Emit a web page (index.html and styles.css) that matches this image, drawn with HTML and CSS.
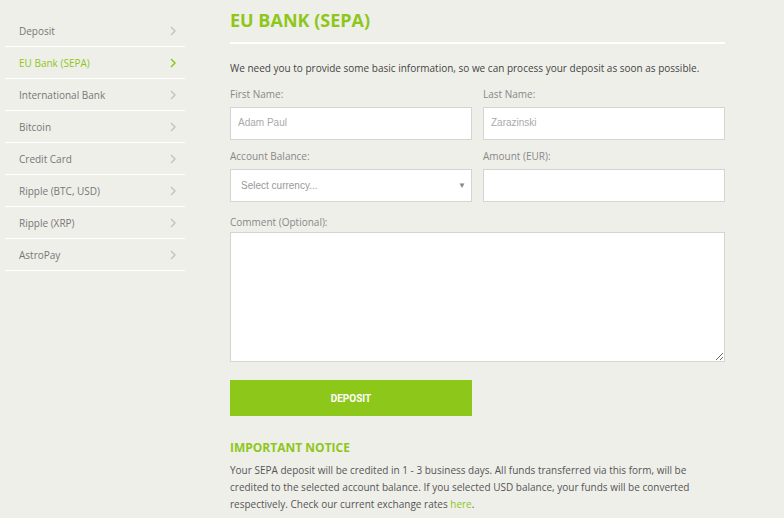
FILE: index.html
```html
<!DOCTYPE html>
<html>
<head>
<meta charset="utf-8">
<link rel="stylesheet" href="styles.css">
</head>
<body>
<div class="page">
  <nav class="sidebar">
    <a class="nav-item">Deposit<span class="chev"><svg width="6" height="10" viewBox="0 0 6 10"><path d="M1 1l4 4-4 4" fill="none" stroke="currentColor" stroke-width="1.5"/></svg></span></a>
    <a class="nav-item active">EU Bank (SEPA)<span class="chev"><svg width="6" height="10" viewBox="0 0 6 10"><path d="M1 1l4 4-4 4" fill="none" stroke="currentColor" stroke-width="1.5"/></svg></span></a>
    <a class="nav-item">International Bank<span class="chev"><svg width="6" height="10" viewBox="0 0 6 10"><path d="M1 1l4 4-4 4" fill="none" stroke="currentColor" stroke-width="1.5"/></svg></span></a>
    <a class="nav-item">Bitcoin<span class="chev"><svg width="6" height="10" viewBox="0 0 6 10"><path d="M1 1l4 4-4 4" fill="none" stroke="currentColor" stroke-width="1.5"/></svg></span></a>
    <a class="nav-item">Credit Card<span class="chev"><svg width="6" height="10" viewBox="0 0 6 10"><path d="M1 1l4 4-4 4" fill="none" stroke="currentColor" stroke-width="1.5"/></svg></span></a>
    <a class="nav-item">Ripple (BTC, USD)<span class="chev"><svg width="6" height="10" viewBox="0 0 6 10"><path d="M1 1l4 4-4 4" fill="none" stroke="currentColor" stroke-width="1.5"/></svg></span></a>
    <a class="nav-item">Ripple (XRP)<span class="chev"><svg width="6" height="10" viewBox="0 0 6 10"><path d="M1 1l4 4-4 4" fill="none" stroke="currentColor" stroke-width="1.5"/></svg></span></a>
    <a class="nav-item">AstroPay<span class="chev"><svg width="6" height="10" viewBox="0 0 6 10"><path d="M1 1l4 4-4 4" fill="none" stroke="currentColor" stroke-width="1.5"/></svg></span></a>
  </nav>
  <main class="main">
    <h1 class="title">EU BANK (SEPA)</h1>
    <p class="intro">We need you to provide some basic information, so we can process your deposit as soon as possible.</p>
    <div class="grid">
      <div class="field">
        <label class="label">First Name:</label>
        <input class="input" type="text" placeholder="Adam Paul">
      </div>
      <div class="field">
        <label class="label">Last Name:</label>
        <input class="input" type="text" placeholder="Zarazinski">
      </div>
      <div class="field">
        <label class="label">Account Balance:</label>
        <div class="select"><span>Select currency...</span><span class="arrow">&#9660;</span></div>
      </div>
      <div class="field">
        <label class="label">Amount (EUR):</label>
        <input class="input" type="text">
      </div>
      <div class="field wide">
        <label class="label label-comment">Comment (Optional):</label>
        <textarea class="textarea"></textarea>
      </div>
    </div>
    <button class="btn">DEPOSIT</button>
    <h2 class="notice-title">IMPORTANT NOTICE</h2>
    <p class="notice">Your SEPA deposit will be credited in 1 - 3 business days. All funds transferred via this form, will be credited to the selected account balance. If you selected USD balance, your funds will be converted respectively. Check our current exchange rates <a class="link">here</a>.</p>
  </main>
</div>
</body>
</html>
```

FILE: styles.css
```css
* { box-sizing: border-box; }
html, body { margin: 0; padding: 0; }
body {
  background: #efefea;
  font-family: "Open Sans", "Liberation Sans", sans-serif;
  color: #555;
  width: 784px;
  height: 518px;
  overflow: hidden;
}
.page {
  display: flex;
  align-items: flex-start;
}
.sidebar {
  margin-left: 5px;
  margin-top: 15px;
  width: 180px;
  display: flex;
  flex-direction: column;
}
.nav-item {
  display: flex;
  align-items: center;
  justify-content: space-between;
  height: 32px;
  padding: 0 9px 0 14px;
  border-bottom: 1px solid #ffffff;
  font-size: 10px;
  color: #777;
}
.nav-item.active { color: #8dc71a; }
.chev { color: #c4c4c4; display: flex; }
.nav-item.active .chev { color: #8dc71a; }
.main {
  margin-left: 45px;
  width: 495px;
}
.title {
  margin: 8px 0 0;
  padding-bottom: 10px;
  border-bottom: 2px solid #ffffff;
  font-size: 18px;
  line-height: 24px;
  font-weight: 700;
  color: #8dc71a;
}
.intro {
  margin: 16px 0 0;
  font-size: 10px;
  line-height: 16px;
  color: #444;
}
.grid {
  margin-top: 10px;
  display: grid;
  grid-template-columns: 242px 242px;
  column-gap: 11px;
  row-gap: 8px;
}
.field { display: flex; flex-direction: column; }
.field.wide { grid-column: 1 / 3; }
.label {
  font-size: 10px;
  line-height: 16px;
  color: #888;
  margin-bottom: 5px;
}
.label-comment { margin-top: 4px; margin-bottom: 2px; }
.input, .select {
  height: 33px;
  border: 1px solid #d4d4d4;
  background: #fff;
  font-family: "Liberation Sans", Arial, sans-serif;
  font-size: 10px;
  padding: 0 7px 3px;
  outline: none;
}
.input::placeholder { color: #aaa; }
.select {
  display: flex;
  align-items: center;
  justify-content: space-between;
  padding: 0 5px 0 10px;
  color: #999;
}
.arrow { font-size: 8px; color: #888; }
.textarea {
  height: 130px;
  width: 495px;
  border: 1px solid #d4d4d4;
  background: #fff;
  resize: vertical;
  outline: none;
}
.btn {
  display: block;
  margin-top: 18px;
  width: 242px;
  height: 36px;
  border: 0;
  background: #8dc71a;
  color: #fff;
  font-family: Roboto, "Open Sans", sans-serif;
  font-weight: 700;
  font-size: 10px;
  padding: 0;
}
.notice-title {
  margin: 24px 0 0;
  font-size: 12px;
  line-height: 16px;
  font-weight: 700;
  color: #8dc71a;
}
.notice {
  margin: 6px 0 0;
  font-size: 10px;
  line-height: 17px;
  color: #555;
}
.link { color: #8dc71a; }
```
